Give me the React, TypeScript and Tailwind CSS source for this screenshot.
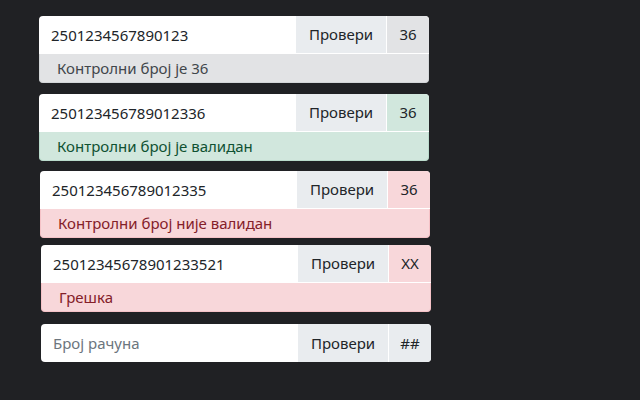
import React from "react";

type Variant = "secondary" | "success" | "danger" | "plain";

const cellBg: Record<Variant, string> = {
  secondary: "bg-[#e2e3e5]",
  success: "bg-[#d1e7dd]",
  danger: "bg-[#f8d7da]",
  plain: "bg-[#e9ecef]",
};

const alertCls: Record<Variant, string> = {
  secondary: "bg-[#e2e3e5] text-[#41464b] border-[#d3d6d8]",
  success: "bg-[#d1e7dd] text-[#0f5132] border-[#badbcc]",
  danger: "bg-[#f8d7da] text-[#842029] border-[#f5c2c7]",
  plain: "",
};

function Group({
  value,
  result,
  variant,
  message,
  cls,
}: {
  value?: string;
  result: string;
  variant: Variant;
  message?: string;
  cls: string;
}) {
  const hasAlert = !!message;
  return (
    <div className={`w-[390px] ${cls}`}>
      <div
        className={`flex h-[38px] bg-white overflow-hidden ${
          hasAlert ? "rounded-t-[4px]" : "rounded-[4px]"
        }`}
      >
        <div className="flex-1 flex items-center pl-[12px]">
          {value ? (
            <span className="text-[#212529]">{value}</span>
          ) : (
            <span className="text-[#6c757d]">Број рачуна</span>
          )}
        </div>
        <div
          className={`w-[90px] flex items-center justify-center bg-[#e9ecef] text-[#212529] ${
            hasAlert ? "border-b border-white" : ""
          }`}
        >
          Провери
        </div>
        <div
          className={`w-[43px] flex items-center justify-center border-l border-white text-[#212529] ${
            cellBg[variant]
          } ${hasAlert ? "border-b" : ""}`}
        >
          {result}
        </div>
      </div>
      {hasAlert && (
        <div
          className={`h-[29px] flex items-center pl-[17px] border border-t-0 rounded-b-[4px] ${alertCls[variant]}`}
        >
          {message}
        </div>
      )}
    </div>
  );
}

export default function App() {
  return (
    <div
      className="w-[640px] h-[400px] bg-[#202124] overflow-hidden text-[15px]"
      style={{ fontFamily: '"Noto Sans", "Open Sans", sans-serif' }}
    >
      <div className="flex flex-col">
        <Group
          cls="mt-[16px] ml-[39px]"
          value="2501234567890123"
          result="36"
          variant="secondary"
          message="Контролни број је 36"
        />
        <Group
          cls="mt-[11px] ml-[39px]"
          value="250123456789012336"
          result="36"
          variant="success"
          message="Контролни број је валидан"
        />
        <Group
          cls="mt-[10px] ml-[40px]"
          value="250123456789012335"
          result="36"
          variant="danger"
          message="Контролни број није валидан"
        />
        <Group
          cls="mt-[7px] ml-[41px]"
          value="25012345678901233521"
          result="XX"
          variant="danger"
          message="Грешка"
        />
        <Group cls="mt-[12px] ml-[41px]" result="##" variant="plain" />
      </div>
    </div>
  );
}
